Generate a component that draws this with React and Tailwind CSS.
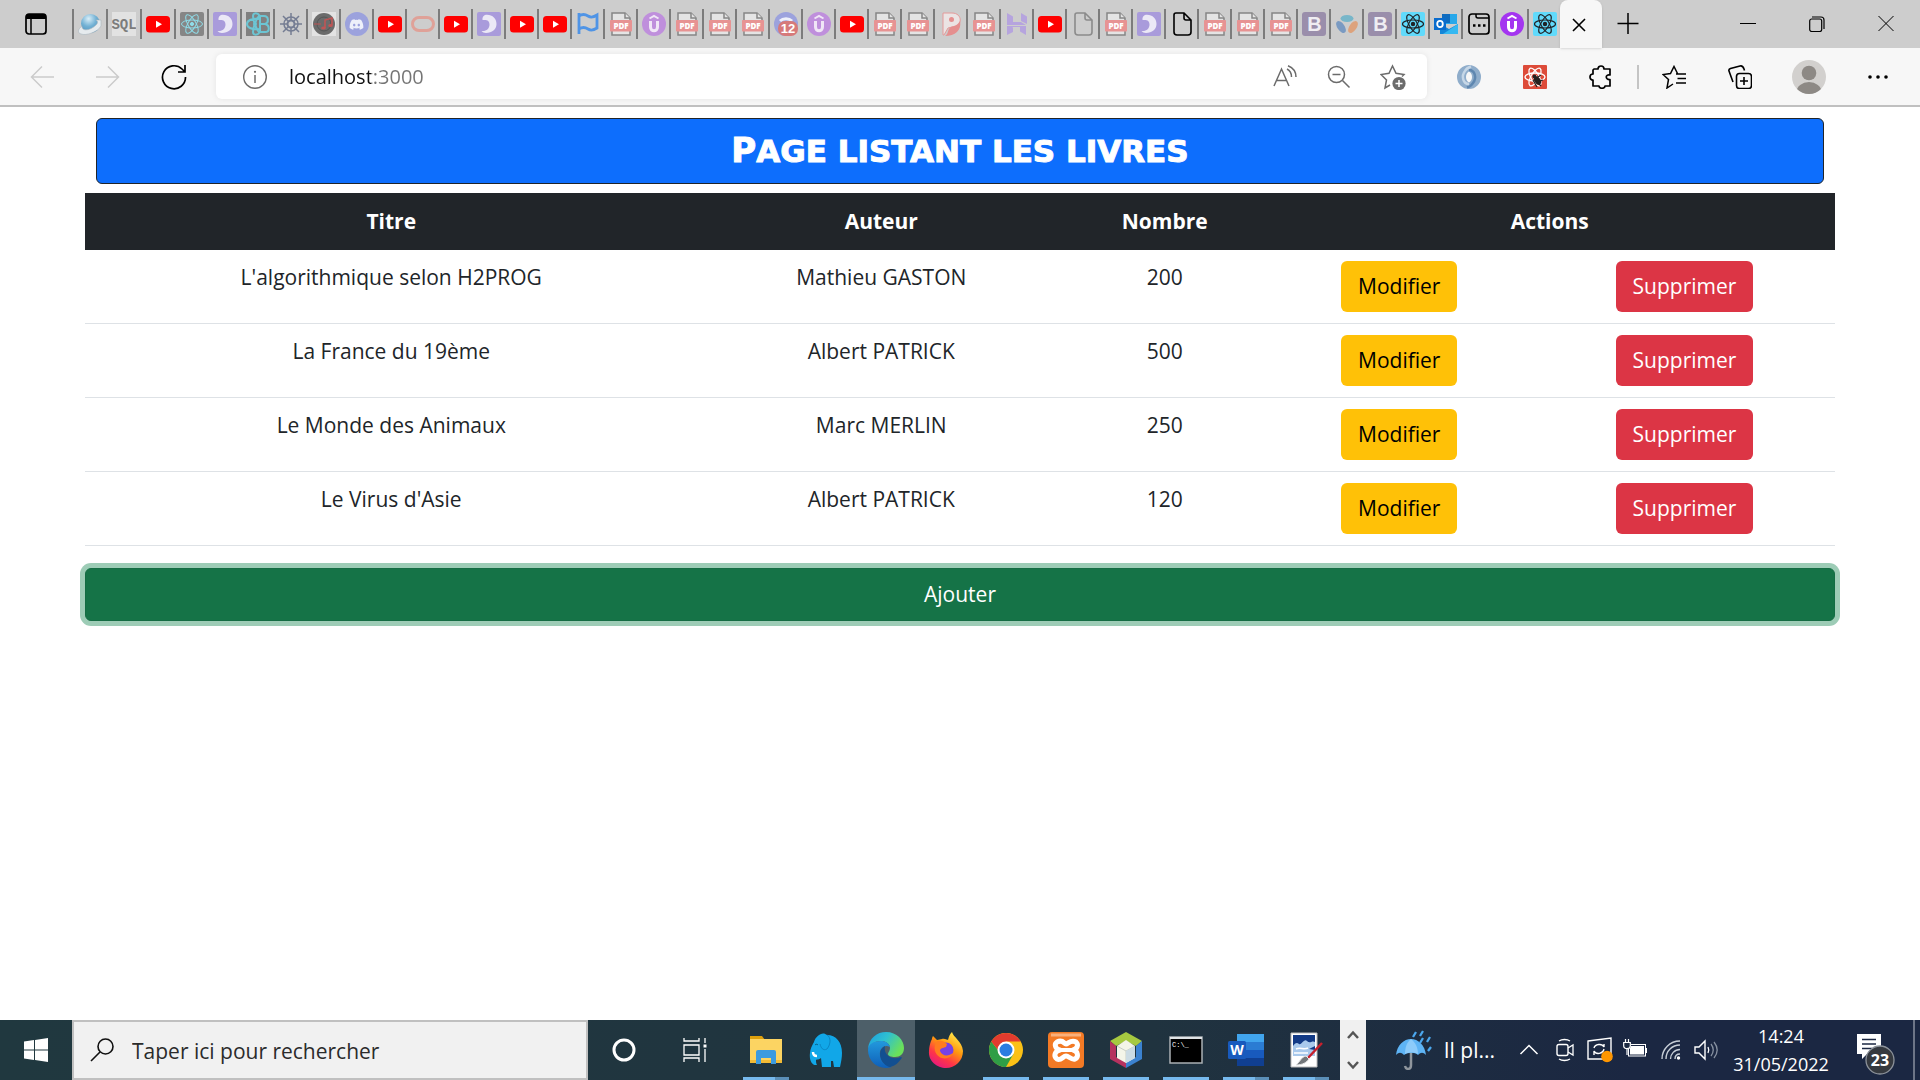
import React from "react";
import { FaDiscord } from "react-icons/fa";

const books = [
  { title: "L'algorithmique selon H2PROG", author: "Mathieu GASTON", count: 200 },
  { title: "La France du 19ème", author: "Albert PATRICK", count: 500 },
  { title: "Le Monde des Animaux", author: "Marc MERLIN", count: 250 },
  { title: "Le Virus d'Asie", author: "Albert PATRICK", count: 120 },
];

function Svg({ children, className = "size-6", box = "0 0 24 24" }) {
  return (
    <svg viewBox={box} className={className} fill="none" aria-hidden="true">
      {children}
    </svg>
  );
}

/* ---------- tab icons ---------- */

function Atom({ color, r = 10.5, width = 1 }) {
  return (
    <g stroke={color} strokeWidth={width}>
      <ellipse cx="12" cy="12" rx={r} ry="4" />
      <ellipse cx="12" cy="12" rx={r} ry="4" transform="rotate(60 12 12)" />
      <ellipse cx="12" cy="12" rx={r} ry="4" transform="rotate(120 12 12)" />
      <circle cx="12" cy="12" r="1.6" fill={color} />
    </g>
  );
}

const Globe = () => (
  <Svg>
    <defs>
      <radialGradient id="globe" cx="0.4" cy="0.25" r="0.8">
        <stop offset="0" stopColor="#d9eef8" />
        <stop offset="0.5" stopColor="#72b1d4" />
        <stop offset="1" stopColor="#4c8fb9" />
      </radialGradient>
    </defs>
    <circle cx="12.500" cy="11.500" r="9.500" fill="url(#globe)" />
    <path d="M4 14c-4 3-5 7-1 8 5 2 17-2 20-8V8h-5c2 1 2 3 0 5-4 4-10 6-13 4-1-1-1-2-1-3z" fill="#e6ebee" stroke="#a9b6bd" strokeWidth=".6" />
  </Svg>
);
const Sql = () => (
  <Svg>
    <rect width="24" height="24" fill="#e2e2e2" />
    <text x="12" y="17" textAnchor="middle" fontSize="14" fontWeight="700" fill="#7c7c7c" fontFamily="Liberation Mono, monospace">SQL</text>
  </Svg>
);
const Youtube = () => (
  <Svg>
    <rect y="4" width="24" height="16.500" rx="3.500" fill="#f00" />
    <path d="M10 8.700v7l6-3.500z" fill="#fff" />
  </Svg>
);
const ReactFaded = () => (
  <Svg>
    <rect width="24" height="24" rx="2" fill="#868686" />
    <Atom color="#8fdde9" />
  </Svg>
);
const ReactBright = () => (
  <Svg>
    <rect width="24" height="24" rx="2" fill="#61dafb" />
    <Atom color="#202327" width={1.2} />
  </Svg>
);
const Crescent = () => (
  <Svg>
    <rect width="24" height="24" rx="2" fill="#a99bdb" />
    <path d="M8 3c7-1 11.500 3.500 11.500 9S15 21 9 21c-2 0-3.500-.7-4.500-2 5 .5 8-2.500 8-6.500S10 7.500 5.500 8C5 5.500 6.500 3.500 8 3z" fill="#ebe8f6" />
  </Svg>
);
const ReactBootstrap = () => (
  <Svg>
    <rect width="24" height="24" fill="#808080" />
    <g stroke="#6cc5d3" strokeWidth="2">
      <path d="M14 4C11 0 7 1 7 4c0 4 3 13 6 16M14 20c-3 4-7 3-7 0 0-4 3-13 6-16M13 7C5 6 1 9 1 12s4 6 12 5" />
      <path d="M14 4v16h5c5 0 5-7 0-8 4-1 4-8-1-8zM14 12h5" />
    </g>
    <circle cx="9" cy="12" r="2" fill="#6cc5d3" />
  </Svg>
);
const Wheel = () => (
  <Svg>
    <g stroke="#757d93" strokeWidth="1.500">
      <circle cx="12" cy="12" r="7" />
      <circle cx="12" cy="12" r="3.500" strokeWidth="2" />
      <path d="M12 1v8M12 15v8M1 12h8M15 12h8M4 4l5.500 5.500M14.500 14.500L20 20M20 4l-5.500 5.500M9.500 14.500L4 20" />
    </g>
  </Svg>
);
const Music = () => (
  <Svg>
    <rect width="24" height="24" fill="#e3e3e3" />
    <circle cx="12" cy="12" r="11" fill="#6b6b6b" />
    <circle cx="12" cy="12" r="7" stroke="#555" />
    <path d="M13 16V8l7-2v7" stroke="#c05555" strokeWidth="1.600" />
    <ellipse cx="11.500" cy="16" rx="2.300" ry="1.600" fill="#c05555" />
    <ellipse cx="18.500" cy="13.500" rx="2.300" ry="1.600" fill="#c05555" />
    <path d="M2 12h7" stroke="#c05555" />
  </Svg>
);
const Discord = () => (
  <span className="flex size-6 items-center justify-center rounded-full bg-[#9ca2dd] text-[#eef0fa]">
    <FaDiscord size={15} />
  </span>
);
const DiscordBadge = () => (
  <Svg>
    <circle cx="12" cy="12" r="12" fill="#9ca2dd" />
    <path d="M6 9c3-3 9-3 12 0" stroke="#eef0fa" strokeWidth="3" />
    <rect x="4" y="9" width="20" height="15" rx="7" fill="#d67a7a" />
    <text x="14" y="21" textAnchor="middle" fontSize="13" fontWeight="700" fill="#fff" fontFamily="Liberation Sans, sans-serif">12</text>
  </Svg>
);
const Ring = () => (
  <Svg>
    <rect x="1.500" y="5.500" width="21" height="13" rx="6.500" stroke="#dfa198" strokeWidth="3" />
  </Svg>
);
const Flag = () => (
  <Svg>
    <path d="M3 1v21M3 4c3-2 6-2 9 0s6 1 9-1v13c-3 2-6 3-9 1s-6-2-9 0" stroke="#4f94e6" strokeWidth="2.800" />
  </Svg>
);
const Pdf = () => (
  <Svg>
    <path d="M3 1h13l5 5v17H3z" fill="#e4e4e4" stroke="#858585" strokeWidth="1.500" />
    <path d="M16 1v5h5" fill="#e4e4e4" stroke="#858585" strokeWidth="1.500" />
    <rect x="1" y="8" width="22" height="11.500" rx=".8" fill="#e79393" />
    <text x="12" y="16.500" textAnchor="middle" fontSize="8" fontWeight="800" fill="#fff" fontFamily="Open Sans, sans-serif">PDF</text>
  </Svg>
);
function UCircle({ color, ink }) {
  return (
    <Svg>
      <circle cx="12" cy="12" r="12" fill={color} />
      <path d="M7.500 6.500L12 4l4.500 2.500" stroke={ink} strokeWidth="2" />
      <path d="M8.500 9v6c0 5 7 5 7 0V9" stroke={ink} strokeWidth="3" />
    </Svg>
  );
}
const UdFaded = () => <UCircle color="#bf8fdc" ink="#f0e6f6" />;
const UdBright = () => <UCircle color="#a435f0" ink="#fff" />;
const PLogo = () => (
  <Svg>
    <path d="M4 1h9c11 0 11 14 0 14l-4 1-4 7H4z" fill="#ebe4e4" stroke="#e49a9a" />
    <path d="M21 9c2 9-5 15-15 15 4-2 2-7 6-9 3-1 7-2 9-6z" fill="#e58f8f" />
    <circle cx="12.500" cy="7.500" r="2.500" fill="#e58f8f" />
  </Svg>
);
const HLogo = () => (
  <Svg>
    <path d="M2 1l6 3.500V10h8l5 3H2zM16 1l6 3.500V12l-6-3zM2 14h19v9l-6-3.500V15H7l1 .5V20l-6 3z" fill="#b6a4de" />
  </Svg>
);
function Doc({ color }) {
  return (
    <Svg>
      <path d="M6 1h8l7 7v12a3 3 0 0 1-3 3H7a3 3 0 0 1-3-3V3a2 2 0 0 1 2-2zM14 1v5a2 2 0 0 0 2 2h5" stroke={color} strokeWidth="1.600" />
    </Svg>
  );
}
const DocFaded = () => <Doc color="#8b8b8b" />;
const DocBlack = () => <Doc color="#000" />;
const BLogo = () => (
  <Svg>
    <rect width="24" height="24" rx="3" fill="#9a8eab" />
    <text x="12.500" y="19" textAnchor="middle" fontSize="20" fontWeight="700" fill="#efedf2" fontFamily="Liberation Sans, sans-serif">B</text>
  </Svg>
);
const Petals = () => (
  <Svg>
    <ellipse cx="12" cy="6.500" rx="6.500" ry="3.500" fill="#78b6c9" />
    <ellipse cx="6" cy="15" rx="3.600" ry="6.800" transform="rotate(-35 6 15)" fill="#7a9ac2" />
    <ellipse cx="18" cy="15" rx="3.600" ry="6.800" transform="rotate(35 18 15)" fill="#dda27c" />
  </Svg>
);
const Outlook = () => (
  <Svg>
    <path d="M8 2h15v10H8z" fill="#28a8ea" />
    <path d="M8 2h8v9H8z" fill="#0f6cbf" />
    <path d="M6 12l9 5 9-5v10H6z" fill="#1486d8" />
    <path d="M24 12v10H9z" fill="#35b8f1" />
    <rect y="6" width="12" height="12" fill="#0a6ccd" />
    <ellipse cx="6" cy="12" rx="2.800" ry="3.200" stroke="#fff" strokeWidth="1.800" />
  </Svg>
);
const WindowDots = () => (
  <Svg>
    <rect x="2" y="2" width="20" height="20" rx="3" stroke="#000" strokeWidth="1.700" />
    <path d="M9 2v2a2 2 0 0 0 2 2h11" stroke="#000" strokeWidth="1.500" />
    <path d="M6 13.500h2.500M11 13.500h2.500M16 13.500h2.500" stroke="#000" strokeWidth="2.500" />
  </Svg>
);

const wideTabs = [
  { name: "Globe", Icon: Globe },
  { name: "SQL", Icon: Sql },
  { name: "YouTube", Icon: Youtube },
];
const tabs = [
  ReactFaded, Crescent, ReactBootstrap, Wheel, Music, Discord, Youtube, Ring, Youtube, Crescent,
  Youtube, Youtube, Flag, Pdf, UdFaded, Pdf, Pdf, Pdf, DiscordBadge, UdFaded, Youtube, Pdf, Pdf,
  PLogo, Pdf, HLogo, Youtube, DocFaded, Pdf, Crescent, DocBlack, Pdf, Pdf, Pdf, BLogo, Petals,
  BLogo, ReactBright, Outlook, WindowDots, UdBright, ReactBright,
];

function TabStrip() {
  return (
    <nav aria-label="Onglets" className="flex h-12 items-center bg-[#cdcdcd]">
      <button aria-label="Menu des onglets" className="flex w-[72px] shrink-0 items-center justify-center">
        <Svg className="size-6">
          <rect x="2" y="2" width="20" height="20" rx="3" stroke="#000" strokeWidth="1.700" />
          <path d="M2 7V5a3 3 0 0 1 3-3h14a3 3 0 0 1 3 3v2z" fill="#000" />
          <path d="M7 7v15" stroke="#000" strokeWidth="1.500" />
        </Svg>
      </button>
      {wideTabs.map(({ name, Icon }) => (
        <button key={name} aria-label={name} className="flex h-[30px] w-[34px] shrink-0 items-center justify-center border-l-2 border-[#7c7c7c]">
          <Icon />
        </button>
      ))}
      {tabs.map((Icon, i) => (
        <button key={i} aria-label={`Onglet ${i + 4}`} className="flex h-[30px] w-[33px] shrink-0 items-center justify-center border-l-2 border-[#7c7c7c]">
          <Icon />
        </button>
      ))}
      <button aria-label="Fermer l'onglet" className="flex h-full w-[42px] shrink-0 items-center justify-center rounded-t-lg bg-[#f7f7f7] pr-1 shadow">
        <Svg className="size-4" box="0 0 16 16">
          <path d="M2 3l12 12M14 3L2 15" stroke="#000" strokeWidth="1.600" />
        </Svg>
      </button>
      <button aria-label="Nouvel onglet" className="flex w-[52px] shrink-0 items-center justify-center">
        <Svg>
          <path d="M12 1v21M1.500 11.500h21" stroke="#000" strokeWidth="1.500" />
        </Svg>
      </button>
      <div className="ml-auto flex">
        <button aria-label="Réduire" className="flex w-[69px] items-center justify-center">
          <Svg className="size-4" box="0 0 16 16"><path d="M0 7.500h16" stroke="#000" /></Svg>
        </button>
        <button aria-label="Restaurer" className="flex w-[69px] items-center justify-center">
          <Svg className="size-4" box="0 0 16 16">
            <rect x=".7" y="3" width="12" height="12.500" rx="2" stroke="#000" strokeWidth="1.200" />
            <path d="M3 1h9a3 3 0 0 1 3 3v9" stroke="#000" strokeWidth="1.200" />
          </Svg>
        </button>
        <button aria-label="Fermer" className="flex w-[69px] items-center justify-center">
          <Svg className="size-4" box="0 0 16 16"><path d="M.5 0l15 15M15.500 0l-15 15" stroke="#000" /></Svg>
        </button>
      </div>
    </nav>
  );
}

function ToolButton({ label, children, className = "w-[66px]" }) {
  return (
    <button aria-label={label} className={`flex h-full shrink-0 items-center justify-center ${className}`}>
      {children}
    </button>
  );
}

function Toolbar() {
  return (
    <div className="flex h-[59px] items-center border-b-2 border-[#c0c0c0] bg-[#f7f7f7] px-[9px]">
      <ToolButton label="Précédent">
        <Svg><path d="M24 12H1M12 1.500L1.500 12 12 22.500" stroke="#cbcbcb" strokeWidth="1.500" /></Svg>
      </ToolButton>
      <ToolButton label="Suivant">
        <Svg><path d="M0 12h23M12 1.500L22.500 12 12 22.500" stroke="#cbcbcb" strokeWidth="1.500" /></Svg>
      </ToolButton>
      <ToolButton label="Actualiser">
        <Svg className="size-[26px]" box="0 0 26 26">
          <path d="M24.500 13A11.500 11.500 0 1 1 21 5l3 3M24 1v7h-7" stroke="#000" strokeWidth="1.700" />
        </Svg>
      </ToolButton>
      <div className="mx-[9px] flex h-[45px] grow items-center rounded-md bg-white pr-[7px] pl-3 shadow-[0_0_6px_rgba(0,0,0,0.08)]">
        <ToolButton label="Informations du site" className="w-[54px]">
          <Svg>
            <circle cx="12" cy="12" r="11.300" stroke="#6b6b6b" strokeWidth="1.400" />
            <path d="M12 10v8" stroke="#6b6b6b" strokeWidth="1.500" />
            <circle cx="12" cy="6.800" r="1.100" fill="#6b6b6b" />
          </Svg>
        </ToolButton>
        <input
          aria-label="Barre d'adresse"
          defaultValue="localhost:3000"
          className="ml-[7px] min-w-0 grow bg-[linear-gradient(to_right,#111111_82px,#757575_82px)] bg-clip-text text-[20px] leading-7 text-transparent outline-none"
        />
        <ToolButton label="Lecture à voix haute" className="w-[54px]">
          <Svg>
            <g stroke="#6b6b6b" strokeWidth="1.500">
              <path d="M1 21L8.500 4 16 21M3.500 15.500h10M14 4c3 1.500 4.500 4.500 4.500 8M15 .7c5 2 8 6 8 11.300" />
            </g>
          </Svg>
        </ToolButton>
        <ToolButton label="Zoom arrière" className="w-[54px]">
          <Svg>
            <circle cx="9.500" cy="9.500" r="8" stroke="#6b6b6b" strokeWidth="1.500" />
            <path d="M5.500 9.500h8M15.500 15.500l7 7" stroke="#6b6b6b" strokeWidth="1.500" />
          </Svg>
        </ToolButton>
        <ToolButton label="Ajouter aux favoris" className="w-[54px]">
          <Svg className="size-[26px]" box="0 0 26 26">
            <path d="M10 21l-5 3 1.500-8L1 10.500l8-1.200L12.500 2l3.500 7.300 8 1.200-2 2" stroke="#6b6b6b" strokeWidth="1.500" />
            <circle cx="19" cy="19.500" r="6.600" fill="#6b6b6b" />
            <path d="M19 16v7M15.500 19.500h7" stroke="#fff" strokeWidth="1.500" />
          </Svg>
        </ToolButton>
      </div>
      <ToolButton label="Extension JSON">
        <Svg>
          <path fillRule="evenodd" d="M12 0a12 12 0 1 0 0 24 12 12 0 0 0 0-24zM12 6.500c4 2 4 9 0 11-4-2-4-9 0-11z" fill="#8fadcb" />
          <path d="M12 5c6 0 8 8 4 13-1 2-3 3.500-6 4.500" stroke="#5f87b0" strokeWidth="2.500" />
          <path d="M12 19C6 19 4 11 8 6c1-2 3-3.500 6-4.500" stroke="#c6d7e7" strokeWidth="2.500" />
        </Svg>
      </ToolButton>
      <ToolButton label="Extension React">
        <Svg>
          <rect width="24" height="24" rx="1" fill="#dd4b39" />
          <Atom color="#fff" r={10} width={1.3} />
          <ellipse cx="14.500" cy="15.500" rx="3" ry="4.500" transform="rotate(-35 14.500 15.500)" fill="#26211f" />
          <circle cx="11.500" cy="11.500" r="2" fill="#26211f" />
          <path d="M10 15l4 7M18 10l-6 4M20 15l-6 2M18 21l-4-4" stroke="#26211f" strokeWidth="1.300" />
        </Svg>
      </ToolButton>
      <ToolButton label="Extensions">
        <Svg>
          <path d="M5 4h4c0-4 6-4 6 0h6v6c-5-1-5 5 0 4.500V21h-5c0 3-6 3-6 0H4v-6c-4 0-4-6 0-6V5z" stroke="#000" strokeWidth="1.700" strokeLinejoin="round" />
        </Svg>
      </ToolButton>
      <div className="flex w-[7px] justify-center"><div className="h-6 w-0.5 bg-[#c4c4c4]" /></div>
      <ToolButton label="Favoris">
        <Svg>
          <path d="M11 19l-6 4 1.500-8.500L1 9.500l7.500-1L12 1.500l3.500 7M14 9h10M15.500 13.500H24M14 18h10" stroke="#000" strokeWidth="1.500" />
        </Svg>
      </ToolButton>
      <ToolButton label="Collections">
        <Svg>
          <rect x="8.500" y="8.500" width="15" height="15" rx="3" stroke="#000" strokeWidth="1.600" />
          <path d="M16 12v8M12 16h8M5 17l-4-11c-.4-1 .4-2 1.500-2.500L12 1c2-.5 3 0 4 3l.5 1.500" stroke="#000" strokeWidth="1.600" />
        </Svg>
      </ToolButton>
      <ToolButton label="Profil" className="w-[72px]">
        <Svg className="size-[34px]" box="0 0 34 34">
          <clipPath id="avatar"><circle cx="17" cy="17" r="17" /></clipPath>
          <g clipPath="url(#avatar)">
            <rect width="34" height="34" fill="#d2d0ce" />
            <circle cx="17" cy="13" r="7.300" fill="#8d8985" />
            <ellipse cx="17" cy="32" rx="12.500" ry="10" fill="#8d8985" />
          </g>
        </Svg>
      </ToolButton>
      <ToolButton label="Paramètres">
        <Svg>
          <g fill="#000">
            <circle cx="4" cy="12" r="1.800" /><circle cx="12" cy="12" r="1.800" /><circle cx="20" cy="12" r="1.800" />
          </g>
        </Svg>
      </ToolButton>
    </div>
  );
}

function BooksPage() {
  return (
    <main className="grow px-[85px] pt-[11px] text-[21px] leading-[33px] text-[#212529]">
      <h1 className="mx-[11px] mb-[9px] rounded-md border border-[#212529] bg-[#0d6efd] py-[15px] text-center font-['DejaVu_Sans',sans-serif] text-[31px] leading-[33px] font-bold text-white uppercase [-webkit-text-stroke:1px_white] first-letter:text-[34px] first-letter:leading-[33px]">
        Page listant les livres
      </h1>
      <table className="w-full table-fixed border-collapse text-center">
        <colgroup>
          <col className="w-[35%]" />
          <col className="w-[21%]" />
          <col className="w-[11.4%]" />
          <col className="w-[15.4%]" />
          <col className="w-[17.2%]" />
        </colgroup>
        <thead className="bg-[#212529] text-white">
          <tr>
            <th className="py-3">Titre</th>
            <th className="py-3">Auteur</th>
            <th className="py-3">Nombre</th>
            <th className="py-3" colSpan={2}>Actions</th>
          </tr>
        </thead>
        <tbody>
          {books.map((b) => (
            <tr key={b.title} className="border-b border-[#dee2e6] align-top">
              <td className="py-[11px]">{b.title}</td>
              <td className="py-[11px]">{b.author}</td>
              <td className="py-[11px]">{b.count}</td>
              <td className="py-[11px]">
                <button className="mx-auto block rounded-md bg-[#ffc107] px-[17px] py-[9px] text-black">Modifier</button>
              </td>
              <td className="py-[11px]">
                <button className="mx-auto block rounded-md bg-[#dc3545] px-[17px] py-[9px] text-white">Supprimer</button>
              </td>
            </tr>
          ))}
        </tbody>
      </table>
      <button className="mt-[22px] block w-full rounded-md border border-[#146c43] bg-[#157347] py-[9px] text-white shadow-[0_0_0_5px_#9dccb6]">
        Ajouter
      </button>
    </main>
  );
}

/* ---------- taskbar ---------- */

const Explorer = () => (
  <Svg className="size-8" box="0 0 32 32">
    <path d="M0 2h12l3 4H0z" fill="#dda00c" />
    <path d="M0 5h32v24H0z" fill="#fcd462" />
    <path d="M0 26h32v3H0z" fill="#f3bb35" />
    <path d="M6 18a2 2 0 0 1 2-2h16a2 2 0 0 1 2 2v12h-5v-6H11v6H6z" fill="#3c9be0" />
  </Svg>
);
const Elephant = () => (
  <Svg className="size-9" box="0 0 36 36">
    <path d="M6 10C8 3 15-1 19 3c9 0 15 7 15 18 0 5-1 9-2 14h-6l-1-6h-2v6h-9l-1-9c-2 2-4 1-5 2 0 2 0 3 1 5-5 1-8-5-7-12 0-4 2-7 4-11z" fill="#11a7e8" />
    <path d="M19 3c4 2 4 9 0 14-4 2-6-1-7-5" stroke="#0b86c5" strokeWidth="1" />
    <path d="M5 20c0 2 1 4 4 4" stroke="#fff" strokeWidth="2.500" />
    <path d="M7 13c1-1 2-1 3 0" stroke="#07587f" strokeWidth="1" />
  </Svg>
);
const Edge = () => (
  <Svg className="size-9" box="0 0 36 36">
    <defs>
      <linearGradient id="edgeTop" x1="0" y1="0" x2="1" y2="0.500">
        <stop offset="0" stopColor="#1b9de2" /><stop offset="0.500" stopColor="#2fc0d0" /><stop offset="1" stopColor="#6be05a" />
      </linearGradient>
      <linearGradient id="edgeLeft" x1="0" y1="0" x2="0" y2="1">
        <stop offset="0" stopColor="#2299dd" /><stop offset="1" stopColor="#0f5fb8" />
      </linearGradient>
    </defs>
    <path d="M0 17C1 6 9 0 18 0c11 0 18 8 18 16 0 6-4 9-9 9-4 0-7-1-7-3s2-3 2-6c0-4-4-7-9-7C7 9 2 12 0 17z" fill="url(#edgeTop)" />
    <path d="M0 18c0-6 6-9 13-9 4 0 8 2 9 6-6-3-11 2-10 8 1 7 6 11 12 12-13 4-24-5-24-17z" fill="url(#edgeLeft)" />
    <path d="M12 22c0-4 2-6 5-8-2 9 7 15 16 11 1 0 1 1 0 2-4 6-9 8-12 8-5-2-9-7-9-13z" fill="#124f91" />
  </Svg>
);
const Firefox = () => (
  <Svg className="size-9" box="0 0 36 36">
    <defs>
      <linearGradient id="fox" x1="0.800" y1="0" x2="0.200" y2="1">
        <stop offset="0" stopColor="#fff14f" /><stop offset="0.400" stopColor="#ff980e" /><stop offset="0.700" stopColor="#ff3647" /><stop offset="1" stopColor="#e31587" />
      </linearGradient>
    </defs>
    <path d="M3 9c1-1 1-4 2-5l4 4 5-1c2-1 6 1 6 1 1-4 2-6 4-8 1 5 10 9 11 19 0 10-8 17-17 17S0 29 1 19c0-4 1-7 2-10z" fill="url(#fox)" />
    <circle cx="18" cy="18" r="7.500" fill="#7542e5" />
    <path d="M9 9c4-1 7 0 10 3l-1 3c-3 1-6 1-6 4 2 5 8 6 13 2-2 7-15 8-18-2-1-4 0-7 2-10z" fill="#ff7c1f" />
  </Svg>
);
const Chrome = () => (
  <Svg className="size-[34px]" box="0 0 34 34">
    <circle cx="17" cy="17" r="17" fill="#fbc116" />
    <path d="M17 17L2.300 8.500A17 17 0 0 1 31.700 8.500H17z" fill="#e33b2e" />
    <path d="M17 17h-8L2.300 8.500A17 17 0 0 0 17 34l7.400-13z" fill="#2f9e46" />
    <path d="M9 17L2.300 8.500 17 8.500z" fill="#e33b2e" />
    <circle cx="17" cy="17" r="8.500" fill="#fff" />
    <circle cx="17" cy="17" r="6.500" fill="#2a7de1" />
  </Svg>
);
const Xampp = () => (
  <Svg className="size-9" box="0 0 36 36">
    <rect width="36" height="36" rx="4" fill="#f37a25" />
    <path d="M3 3h30" stroke="#f9b07b" strokeWidth="3" />
    <path d="M9 10c6-3 7 2 9 2s5-5 10-2c3 3 1 7-3 8 5 1 6 7 2 9-4 1-6-3-9-3s-5 5-9 3c-4-3-2-8 3-9-5-1-6-6-3-8z" stroke="#fff" strokeWidth="5" strokeLinejoin="round" />
    <path d="M12 18h12" stroke="#fff" strokeWidth="4" />
  </Svg>
);
const Cube = () => (
  <Svg className="size-9" box="0 0 36 36">
    <path d="M18 0l16 9-6 5-10-5-10 5-6-5z" fill="#a6c940" />
    <path d="M2 9l6 5v11l10 5v6L2 27z" fill="#b6325f" />
    <path d="M34 9l-6 5v11l-10 5v6l16-9z" fill="#3b82d0" />
    <path d="M18 8l9 6v12l-9 5-9-5V14z" fill="#f4f5e9" />
    <path d="M9 14l9 5 9-5M18 19v12" stroke="#c8cec6" />
    <path d="M18 19l9-5v12l-9 5z" fill="#cbdbe4" />
  </Svg>
);
const Console = () => (
  <Svg className="size-[34px]" box="0 0 34 34">
    <rect x="1" y="4" width="32" height="26" fill="#000" stroke="#aab0b4" strokeWidth="1.500" />
    <path d="M1 5h32" stroke="#dfe3e6" strokeWidth="2" />
    <text x="3" y="14" fontSize="7" fill="#fff" fontFamily="Liberation Mono, monospace">C:\_</text>
  </Svg>
);
const Word = () => (
  <Svg className="size-9" box="0 0 36 36">
    <path d="M9 2h27v8H9z" fill="#41a5ee" /><path d="M9 10h27v8H9z" fill="#2b7cd3" />
    <path d="M9 18h27v8H9z" fill="#185abd" /><path d="M9 26h27v8H9z" fill="#103f91" />
    <rect y="9" width="18" height="18" rx="1.500" fill="#185abd" />
    <text x="9" y="23" textAnchor="middle" fontSize="14" fontWeight="700" fill="#fff" fontFamily="Open Sans, sans-serif">W</text>
  </Svg>
);
const Paint = () => (
  <Svg className="size-9" box="0 0 36 36">
    <path d="M3 1h26v34H3z" fill="#fff" stroke="#bbb" />
    <path d="M5 3h22v21H5z" fill="#123a86" />
    <path d="M5 14c2-3 4-4 6-2s5-6 8-3 5-1 8 1v4l-6 3 6 1v6H5z" fill="#a9c9ec" />
    <path d="M8 17c4-2 8 1 12-1M6 21h14" stroke="#fff" strokeWidth="1.500" />
    <path d="M34 11L19 27" stroke="#c7202d" strokeWidth="2.500" />
    <path d="M18 24l3 3c-2 3-6 6-13 6 4-3 5-8 10-9z" fill="#73777b" stroke="#e6e6e6" />
  </Svg>
);

const apps = [
  { name: "Explorateur de fichiers", Icon: Explorer, state: "split" },
  { name: "MAMP", Icon: Elephant, state: "none" },
  { name: "Microsoft Edge", Icon: Edge, state: "active" },
  { name: "Firefox", Icon: Firefox, state: "none" },
  { name: "Google Chrome", Icon: Chrome, state: "open" },
  { name: "XAMPP", Icon: Xampp, state: "open" },
  { name: "NetBeans", Icon: Cube, state: "open" },
  { name: "Invite de commandes", Icon: Console, state: "open" },
  { name: "Word", Icon: Word, state: "split" },
  { name: "Paint", Icon: Paint, state: "split" },
];

function AppButton({ name, Icon, state }) {
  return (
    <button
      aria-label={name}
      className={`flex h-full w-[58px] shrink-0 flex-col items-center ${state === "active" ? "bg-[#4d5f69]" : ""}`}
    >
      <span className="flex grow items-center pt-0.5"><Icon /></span>
      {state === "active" && <span className="h-[3px] w-full bg-[#76b9ed]" />}
      {state === "open" && <span className="h-[3px] w-[46px] bg-[#76b9ed]" />}
      {state === "split" && (
        <span className="flex h-[3px] w-[46px]">
          <span className="grow bg-[#76b9ed]" />
          <span className="w-[14px] bg-[#5b8fb8]" />
        </span>
      )}
      {state === "none" && <span className="h-[3px]" />}
    </button>
  );
}

function TrayButton({ label, children, className = "w-9" }) {
  return (
    <button aria-label={label} className={`flex h-full shrink-0 items-center justify-center ${className}`}>
      {children}
    </button>
  );
}

function Taskbar() {
  return (
    <footer className="flex h-[60px] shrink-0 bg-[linear-gradient(to_right,#20383f,#20333f_60%,#1b2742_85%)] text-white">
      <button aria-label="Démarrer" className="flex w-[72px] shrink-0 items-center justify-center">
        <Svg>
          <path d="M0 3.500l10-1.400v9.300H0zM11 2l13-2v11.400H11zM0 12.500h10V22L0 20.500zM11 12.500h13V24l-13-2z" fill="#fff" />
        </Svg>
      </button>
      <label className="flex w-[516px] shrink-0 items-center border-2 border-[#c0c0c0] bg-[#f1f1f1] pl-4">
        <Svg className="size-6">
          <circle cx="15.500" cy="8.500" r="7.500" stroke="#111" strokeWidth="1.600" />
          <path d="M10 14L1 23" stroke="#111" strokeWidth="1.600" />
        </Svg>
        <input
          aria-label="Rechercher"
          placeholder="Taper ici pour rechercher"
          className="mt-0.5 ml-[18px] min-w-0 grow bg-transparent text-[21px] leading-8 text-[#2b2b2b] outline-none placeholder:text-[#2b2b2b] placeholder:opacity-100"
        />
      </label>
      <button aria-label="Cortana" className="flex w-[72px] shrink-0 items-center justify-center">
        <Svg><circle cx="12" cy="12" r="10" stroke="#fff" strokeWidth="3" /></Svg>
      </button>
      <button aria-label="Affichage des tâches" className="flex w-[70px] shrink-0 items-center justify-center">
        <Svg>
          <path d="M1 0v3h15V0M1 7h15v10H1zM1 24v-4h15v4M22 0v5M22 11v13" stroke="#fff" strokeWidth="1.300" />
          <rect x="20.500" y="6.500" width="3" height="3" fill="#fff" />
        </Svg>
      </button>
      <div className="ml-[7px] flex gap-0.5">
        {apps.map((a) => <AppButton key={a.name} {...a} />)}
      </div>
      <div className="ml-[5px] flex w-[26px] shrink-0 flex-col items-center justify-around bg-[#f0f0f0]">
        <Svg className="size-3" box="0 0 12 12"><path d="M1 9l5-5.500L11 9" stroke="#555" strokeWidth="2.500" /></Svg>
        <Svg className="size-3" box="0 0 12 12"><path d="M1 3l5 5.500L11 3" stroke="#555" strokeWidth="2.500" /></Svg>
      </div>
      <div className="ml-auto flex items-center">
        <button className="mr-4 flex items-center gap-3 text-[21px] leading-8">
          <Svg className="h-10 w-9" box="0 0 36 40">
            <path d="M15 16v19c0 5-5 5-6 1" stroke="#8f969d" strokeWidth="2.500" />
            <path d="M0 25C1 15 8 9 15 9s14 6 15 16c-3-3-5-3-8 0-3-3-10-3-14 0-3-3-5-3-8 0z" fill="#5eb4f5" />
            <path d="M9 24c0-7 2-12 6-15 5 4 7 9 7 15-4-2-9-2-13 0z" fill="#8ccbfa" />
            <path d="M20 2l-3 5M27 1l-3 5M27 8l-3 5M34 7l-3 5M35 17l-3 4" stroke="#4ba7ee" strokeWidth="2.300" />
          </Svg>
          <span>Il pl...</span>
        </button>
        <TrayButton label="Icônes cachées">
          <Svg className="size-5" box="0 0 20 20"><path d="M1.500 14L10 5.500l8.500 8.500" stroke="#fff" strokeWidth="1.500" /></Svg>
        </TrayButton>
        <TrayButton label="Caméra">
          <Svg>
            <rect x="4" y="6.500" width="11" height="11" rx="2" stroke="#fff" strokeWidth="1.400" />
            <path d="M15 10l5-3v10l-5-3M6 3c3-2 8-2 11 0M6 21c3 2 8 2 11 0" stroke="#fff" strokeWidth="1.300" />
          </Svg>
        </TrayButton>
        <TrayButton label="Mises à jour" className="w-[34px]">
          <Svg className="size-[26px]" box="0 0 26 26">
            <path d="M1 4l23-3v21L1 22z" stroke="#fff" strokeWidth="1.400" />
            <path d="M7 11c1-4 8-5 10-1V7M17 12c-1 5-8 6-10 2v4" stroke="#fff" strokeWidth="1.400" />
            <circle cx="20" cy="19.500" r="5.800" fill="#ff9600" />
          </Svg>
        </TrayButton>
        <TrayButton label="Batterie">
          <Svg>
            <rect x="5.500" y="6.500" width="17" height="11.500" stroke="#fff" strokeWidth="1" />
            <rect x="7" y="8" width="14" height="8.500" fill="#fff" />
            <path d="M22 10h2v5h-2z" fill="#fff" />
            <path d="M0 4h8v4c0 4-8 4-8 0z" fill="#1c2a42" />
            <path d="M.7 4.500h6.600V8c0 3.500-6.600 3.500-6.600 0zM2.500 1v3M5.500 1v3M4 11v6" stroke="#fff" strokeWidth="1.200" />
          </Svg>
        </TrayButton>
        <TrayButton label="Wi-Fi">
          <Svg className="size-5" box="0 0 20 20">
            <path d="M1 19C1 9 9 1 19 1M5 19C5 11 11 5 19 5M9.500 19c0-5 4-9.500 9.500-9.500M14 19c0-3 2-5 5-5" stroke="#c8cfd8" strokeWidth="1.400" />
            <circle cx="17.500" cy="18" r="1.700" fill="#fff" />
          </Svg>
        </TrayButton>
        <TrayButton label="Volume" className="w-[34px]">
          <Svg>
            <path d="M1 9h4l6-6v18l-6-6H1z" stroke="#fff" strokeWidth="1.400" />
            <path d="M14 9c1 2 1 4 0 6" stroke="#fff" strokeWidth="1.300" />
            <path d="M17 6c3 4 3 8 0 12M20 4c4 5 4 11 0 16" stroke="#8690a0" strokeWidth="1.300" />
          </Svg>
        </TrayButton>
        <button className="flex w-[116px] flex-col items-center text-[18px] leading-7">
          <span>14:24</span>
          <span>31/05/2022</span>
        </button>
        <button aria-label="23 notifications" className="ml-[18px] flex h-full w-[56px] items-center pt-2">
          <Svg className="h-[42px] w-[38px]" box="0 0 38 42">
            <path d="M0 1h24v20H10l-5 5v-5H0z" fill="#fff" />
            <path d="M5 6.500h14M5 11h14M5 15.500h10" stroke="#1b2742" strokeWidth="1.500" />
            <circle cx="23" cy="27" r="14" fill="#35393f" stroke="#8d939b" strokeWidth="1.300" />
            <text x="23" y="33" textAnchor="middle" fontSize="16" fontWeight="700" fill="#fff" fontFamily="Open Sans, sans-serif">23</text>
          </Svg>
        </button>
        <div className="mr-[5px] h-full w-0.5 bg-[#6d7587]" />
      </div>
    </footer>
  );
}

export default function App() {
  return (
    <div className="flex min-h-screen flex-col overflow-hidden bg-white font-['Open_Sans','Noto_Sans',sans-serif]">
      <header>
        <TabStrip />
        <Toolbar />
      </header>
      <BooksPage />
      <Taskbar />
    </div>
  );
}
